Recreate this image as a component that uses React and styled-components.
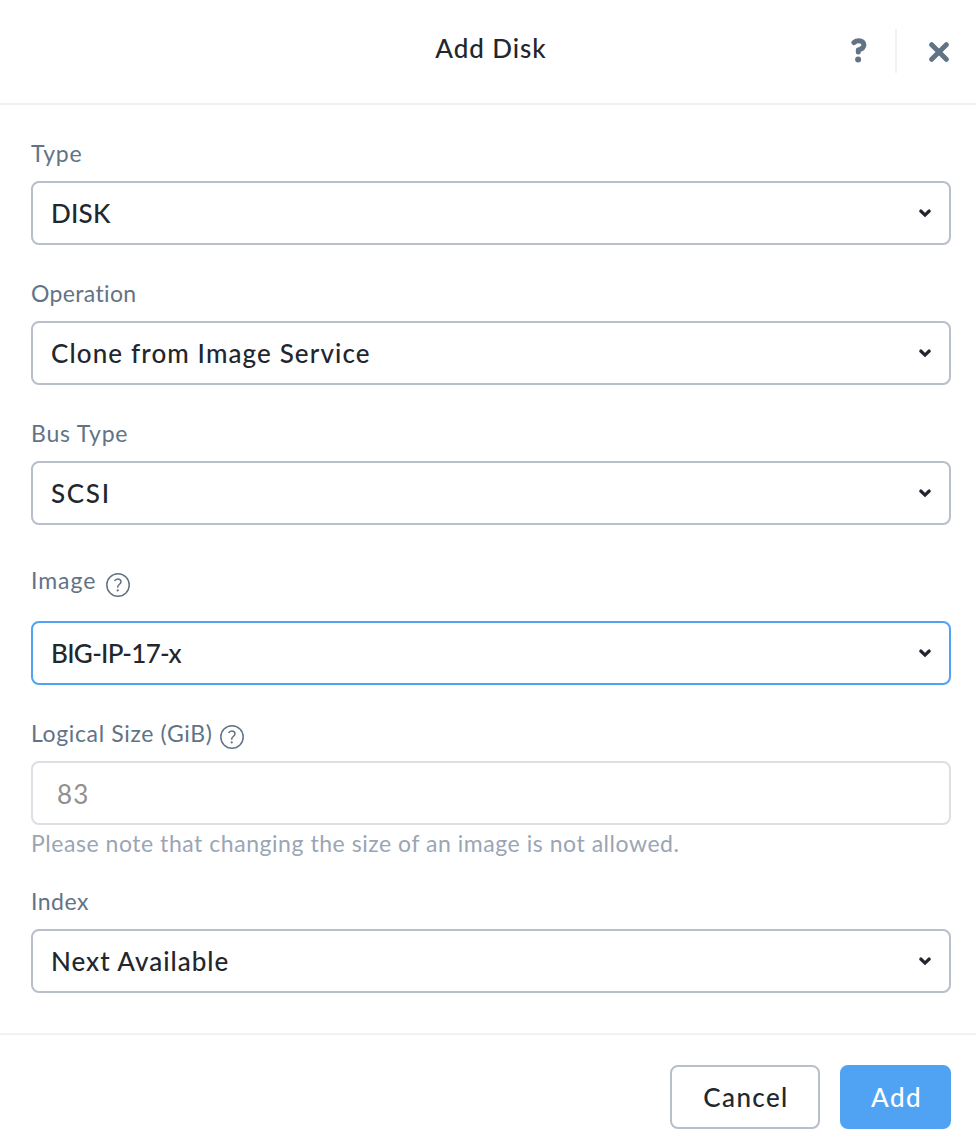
import React from 'react';
import styled, { createGlobalStyle } from 'styled-components';

const GlobalStyle = createGlobalStyle`
  *, *::before, *::after { box-sizing: border-box; }
  body { margin: 0; background: #fff; }
  button { font: inherit; }
`;

const Dialog = styled.div`
  display: flex;
  flex-direction: column;
  width: 976px;
  height: 1144px;
  background: #fff;
  color: #22272e;
  font-family: Lato, "Liberation Sans", sans-serif;
  overflow: hidden;
`;

const Header = styled.header`
  display: grid;
  grid-template-columns: 1fr auto 1fr;
  height: 105px;
  padding: 29px 25px 0 31px;
  border-bottom: 2px solid #f2f2f2;
`;

const Title = styled.h1`
  grid-column: 2;
  margin: 0;
  font-size: 26px;
  font-weight: 500;
  line-height: 38px;
  letter-spacing: ${(p) => p.$tracking}px;
`;

const HeaderActions = styled.div`
  display: flex;
  justify-content: flex-end;
  height: 44px;
`;

const IconButton = styled.button`
  display: flex;
  padding: ${(p) => p.$pad};
  border: 0;
  background: none;
  color: #627386;
`;

const Divider = styled.span`
  width: 2px;
  height: 44px;
  background: #f2f2f2;
`;

const Body = styled.main`
  height: 928px;
  padding: 0 25px 0 31px;
`;

const Field = styled.div`
  padding-top: ${(p) => p.$top || 33}px;
`;

const LabelRow = styled.div`
  display: flex;
  align-items: center;
  height: 30px;
  margin-bottom: ${(p) => p.$gap || 13}px;
  color: #627386;
`;

const LabelText = styled.label`
  min-width: ${(p) => p.$width || 0}px;
  margin-bottom: ${(p) => p.$lift || 0}px;
  font-size: 23px;
  line-height: 30px;
  white-space: nowrap;
  letter-spacing: ${(p) => p.$tracking}px;
`;

const HelpSvg = styled.svg`
  flex: none;
  margin-top: 8px;
`;

const SelectBox = styled.div`
  display: flex;
  align-items: center;
  justify-content: space-between;
  height: 64px;
  padding: 0 17px 0 18px;
  border: 2px solid ${(p) => (p.$active ? '#50a3f2' : '#b8bfca')};
  border-radius: 8px;
`;

const Value = styled.span`
  font-size: 26px;
  font-weight: 500;
  line-height: 36px;
  letter-spacing: ${(p) => p.$tracking}px;
`;

const DisabledInput = styled.div`
  display: flex;
  align-items: center;
  height: 64px;
  padding: 2px 24px 0;
  border: 2px solid #dce0e5;
  border-radius: 8px;
  color: #909090;
  font-size: 26px;
  line-height: 36px;
  letter-spacing: 1.2px;
`;

const Hint = styled.p`
  margin: 3px 0 0;
  color: #9aa5b5;
  font-size: 23px;
  line-height: 30px;
  letter-spacing: 0.54px;
`;

const Footer = styled.footer`
  display: flex;
  justify-content: flex-end;
  gap: 20px;
  padding: 30px 25px 0;
  border-top: 2px solid #f2f2f2;
`;

const Button = styled.button`
  width: ${(p) => p.$width}px;
  height: 64px;
  padding: 0 0 0 2px;
  border: 2px solid ${(p) => (p.$primary ? '#50a3f2' : '#b8bfca')};
  border-radius: 8px;
  background: ${(p) => (p.$primary ? '#50a3f2' : '#fff')};
  color: ${(p) => (p.$primary ? '#fff' : '#22272e')};
  font-size: 26px;
  font-weight: 500;
  line-height: 36px;
  letter-spacing: 1.4px;
`;

const Chevron = () => (
  <svg width="14" height="10" viewBox="0 0 14 10" fill="none">
    <path d="M2.8 3 7 7.1 11.2 3" stroke="currentColor" strokeWidth="3.2" strokeLinecap="round" />
  </svg>
);

const HelpIcon = () => (
  <HelpSvg width="24" height="24" viewBox="0 0 24 24" fill="none" stroke="currentColor">
    <circle cx="12" cy="12" r="11.2" strokeWidth="1.5" />
    <path d="M8.5 8C9.2 6.6 10.3 5.9 11.8 5.9c2 0 3.2 1.1 3.2 2.8 0 2.7-3.3 2.8-3.3 5.2v.8" strokeWidth="1.5" />
    <circle cx="11.7" cy="17.4" r="1.1" fill="currentColor" stroke="none" />
  </HelpSvg>
);

const QuestionIcon = () => (
  <svg width="16" height="25" viewBox="0 0 16 25" fill="none">
    <path d="M2.9 4.6C4.2 3.4 5.9 2.8 8 2.8c3 0 4.9 1.5 4.9 4 0 3.2-2.5 4.4-5.6 5.1v2" stroke="currentColor" strokeWidth="5" strokeLinecap="round" strokeLinejoin="round" />
    <circle cx="7.1" cy="21.4" r="3" fill="currentColor" />
  </svg>
);

const CloseIcon = () => (
  <svg width="20" height="20" viewBox="0 0 20 20" fill="none">
    <path d="M2.7 2.7 17.3 17.3M17.3 2.7 2.7 17.3" stroke="currentColor" strokeWidth="5" strokeLinecap="round" />
  </svg>
);

function SelectField({ label, tracking, value, valueTracking, top, gap, help, labelWidth, lift, active }) {
  return (
    <Field $top={top}>
      <LabelRow $gap={gap}>
        <LabelText $tracking={tracking} $width={labelWidth} $lift={lift}>{label}</LabelText>
        {help && <HelpIcon />}
      </LabelRow>
      <SelectBox $active={active} role="combobox" aria-label={label}>
        <Value $tracking={valueTracking}>{value}</Value>
        <Chevron />
      </SelectBox>
    </Field>
  );
}

export default function App() {
  return (
    <>
      <GlobalStyle />
      <Dialog role="dialog">
        <Header>
          <span />
          <Title $tracking={0.95}>Add Disk</Title>
          <HeaderActions>
            <IconButton $pad="9px 28px 0 0" aria-label="Help"><QuestionIcon /></IconButton>
            <Divider />
            <IconButton $pad="13px 2px 0 32px" aria-label="Close"><CloseIcon /></IconButton>
          </HeaderActions>
        </Header>
        <Body>
          <SelectField label="Type" tracking={0.7} value="DISK" valueTracking={0.2} />
          <SelectField label="Operation" tracking={0.36} value="Clone from Image Service" valueTracking={1.12} />
          <SelectField label="Bus Type" tracking={0.77} value="SCSI" valueTracking={1.7} />
          <SelectField label="Image" tracking={0.95} value="BIG-IP-17-x" valueTracking={-0.7} top={41} gap={25} labelWidth={75} lift={2} help active />
          <Field>
            <LabelRow>
              <LabelText $tracking={0.64} $width={189}>Logical Size (GiB)</LabelText>
              <HelpIcon />
            </LabelRow>
            <DisabledInput>83</DisabledInput>
            <Hint>Please note that changing the size of an image is not allowed.</Hint>
          </Field>
          <SelectField label="Index" tracking={0.5} value="Next Available" valueTracking={1} top={28} />
        </Body>
        <Footer>
          <Button $width={150}>Cancel</Button>
          <Button $width={111} $primary>Add</Button>
        </Footer>
      </Dialog>
    </>
  );
}
